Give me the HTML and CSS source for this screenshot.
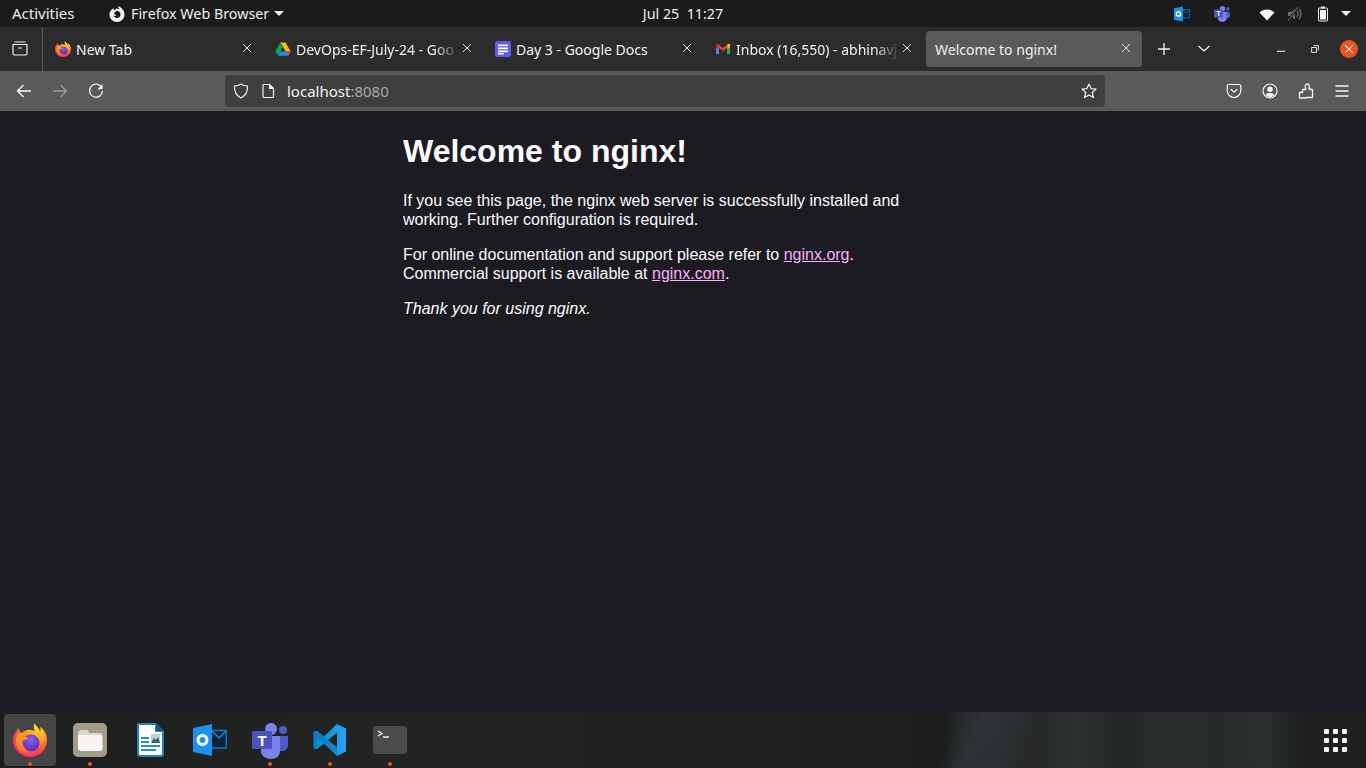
FILE: index.html
```html
<!DOCTYPE html>
<html>
<head>
  <meta charset="utf-8">
  <title>Welcome to nginx!</title>
  <link rel="stylesheet" href="styles.css">
</head>
<body>
  <svg class="icon-defs" width="0" height="0">
    <defs>
      <radialGradient id="fx-body" gradientUnits="userSpaceOnUse" cx="24" cy="6" r="32">
        <stop offset="0" stop-color="#ffd52e"/>
        <stop offset="0.35" stop-color="#ff9a1e"/>
        <stop offset="0.7" stop-color="#ff4a3c"/>
        <stop offset="1" stop-color="#f0207e"/>
      </radialGradient>
      <linearGradient id="fx-wave" x1="0" y1="0" x2="0.6" y2="1">
        <stop offset="0" stop-color="#ffa81e"/>
        <stop offset="0.6" stop-color="#ff7a28"/>
        <stop offset="1" stop-color="#ff3d55"/>
      </linearGradient>
      <linearGradient id="fx-flame" x1="0.3" y1="0" x2="0.7" y2="1">
        <stop offset="0" stop-color="#ffe03a"/>
        <stop offset="1" stop-color="#ffa01e"/>
      </linearGradient>
      <radialGradient id="fx-globe" cx="0.5" cy="0.3" r="0.75">
        <stop offset="0" stop-color="#8f5cf0"/>
        <stop offset="1" stop-color="#4c2bb8"/>
      </radialGradient>
      <linearGradient id="vs-light" x1="0" y1="0" x2="1" y2="0">
        <stop offset="0" stop-color="#0a84d0"/>
        <stop offset="1" stop-color="#27a5f0"/>
      </linearGradient>
      <symbol id="firefox" viewBox="0 0 34 34">
        <path fill="url(#fx-body)" d="M6 5C3 8 0 12 0 17C0 27 8 34 17 34C27 34 34 26 34 17C34 11 31 6 27 4C28 6 28 8 27 9C26 5 23 3 21 0C21 4 20 7 23 9C20 7 16 6 13 7.500C11 8 9 9.500 8.500 10C7 9 6 7 6 5Z"/>
        <circle fill="url(#fx-globe)" cx="18" cy="20" r="8.500"/>
        <path fill="url(#fx-flame)" d="M21 1C21 5 23 8 26 11C28 14 29 17 29 21C31 18 32 13 30 9C29 7 28 5 27 4C28 6 28 8 27 9C26 5 23 3 21 1Z"/>
        <path fill="url(#fx-wave)" d="M4 12C5 10 9 9 13 11C11 11 10 12 10 13C12 14 15 14 15 15.500C13 17 11 17 9 18C10 24 14 28.500 19 28.500C24 28.500 28 25 29 21C29 28 24 32 17 32C9 32 2 25 3 17Z"/>
      </symbol>
      <symbol id="teams" viewBox="0 0 36 36">
        <circle fill="#7b83eb" cx="19" cy="6" r="6"/>
        <circle fill="#5059c9" cx="31" cy="7" r="4"/>
        <path fill="#5059c9" d="M25 13H35C35.600 13 36 13.400 36 14V22C36 26 33 28 30 28C27 28 25 26 25 24Z"/>
        <path fill="#7b83eb" d="M9 13H28V28C28 33 24 36 19 36C14 36 9 33 9 28Z"/>
        <rect fill="#4b53bc" x="0" y="8" width="20" height="18" rx="1.500"/>
        <text class="teams-letter" x="10" y="22.500" text-anchor="middle">T</text>
      </symbol>
      <symbol id="outlook" viewBox="0 0 34 34">
        <path fill="#0c2436" stroke="#1573c5" stroke-width="1.500" d="M18 7.500H33.200V25H18Z"/>
        <path fill="none" stroke="#1f86dc" stroke-width="1.500" d="M19 8L26 15L33 8"/>
        <path fill="#1e90f0" d="M0 5L19 1V33L0 29Z"/>
        <circle fill="none" stroke="#fff" stroke-width="3" cx="9.500" cy="17" r="4.500"/>
      </symbol>
    </defs>
  </svg>

  <header class="top-bar">
    <div class="top-left">
      <span class="activities">Activities</span>
      <span class="app-menu">
        <svg class="app-logo" viewBox="0 0 16 16"><path fill="#f2f2f2" d="M9 0C9 1.500 10 2.500 11.500 3C10.500 2.700 9 2.700 8 3.200C7.700 2.800 7.600 2.400 7.600 2C6.800 2.600 6.200 3.500 6 4.500C5 4 4.500 3.200 4.200 2.300C1.600 4 0.500 6.300 0.500 8.500C0.500 12.700 3.800 16 8 16C12.200 16 15.500 12.700 15.500 8.500C15.500 4.800 13 1.500 9 0ZM8 5C10 5 11.500 6.500 11.500 8.500C11.500 10.500 10 12 8 12C6.200 12 4.800 10.800 4.500 9.200C5.500 10 7 10 8 9C7 9 5.500 8.500 5.200 7.200C5.800 6 6.800 5 8 5Z" fill-rule="evenodd"/></svg>
        Firefox Web Browser
        <span class="caret"></span>
      </span>
    </div>
    <div class="clock">Jul 25&nbsp;&nbsp;11:27</div>
    <div class="tray">
      <span class="tray-app"><svg class="tray-icon"><use href="#outlook"/></svg></span>
      <span class="tray-app"><svg class="tray-icon"><use href="#teams"/></svg></span>
      <span class="tray-item tray-wifi">
        <svg viewBox="0 0 16 16" class="status-icon"><path fill="#f4f4f4" d="M0.500 6.500C2.500 4.500 5 3.500 8 3.500C11 3.500 13.500 4.500 15.500 6.500L8 14.500Z"/></svg>
      </span>
      <span class="tray-item">
        <svg viewBox="0 0 16 16" class="status-icon"><path fill="#6f6f6f" d="M1 6H4L8 2.500V13.500L4 10H1Z"/><path fill="none" stroke="#6f6f6f" stroke-width="1.200" d="M10 5C11.500 6.500 11.500 9.500 10 11M12 3C14.500 5.500 14.500 10.500 12 13"/><path stroke="#1b1b1b" stroke-width="2.500" d="M1 15L11 1"/><path stroke="#6f6f6f" stroke-width="1" d="M1 15L11 1"/></svg>
      </span>
      <span class="tray-item">
        <svg viewBox="0 0 16 16" class="status-icon"><rect fill="#f4f4f4" x="6" y="0.500" width="4" height="2"/><rect x="3.500" y="2" width="9" height="13" rx="1" fill="none" stroke="#f4f4f4"/><rect fill="#f4f4f4" x="5" y="4" width="6" height="9.500"/></svg>
      </span>
      <span class="tray-caret"><span class="caret"></span></span>
    </div>
  </header>

  <nav class="tab-bar">
    <button class="tab-view">
      <svg viewBox="0 0 16 16" class="btn-icon"><path fill="none" stroke="#f2f2f2" stroke-width="1.200" d="M2.500 1H13.500M1 4.500C1 3.700 1.500 3 2.500 3.500H13.500C14.500 3 15 3.700 15 4.500V12.500C15 13.500 14.500 14 13.500 14H2.500C1.500 14 1 13.500 1 12.500ZM6 7H10"/></svg>
    </button>
    <div class="tabs">
      <div class="tab">
        <svg class="favicon"><use href="#firefox"/></svg>
        <span class="tab-title">New Tab</span>
        <svg class="tab-close" viewBox="0 0 10 10"><path d="M1 1L9 9M9 1L1 9"/></svg>
      </div>
      <div class="tab">
        <svg class="favicon" viewBox="0 0 16 16"><path fill="#ffba00" d="M5.500 1.500H10.500L15.700 10.500H10.500Z"/><path fill="#00a94b" d="M5.500 1.500L8 6L3 14.500L0.300 10.500Z"/><path fill="#2684fc" d="M5.500 10.500H15.700L13 14.700H3Z"/><path fill="#ea4335" d="M10.500 10.500H15.700L13 14.700H12.800Z"/></svg>
        <span class="tab-title tab-fade">DevOps-EF-July-24 - Goo</span>
        <svg class="tab-close" viewBox="0 0 10 10"><path d="M1 1L9 9M9 1L1 9"/></svg>
      </div>
      <div class="tab">
        <svg class="favicon" viewBox="0 0 16 16"><rect fill="#5e5bf0" width="16" height="16" rx="2"/><path fill="#fff" d="M3 3.500H13V5.300H3ZM3 6.500H13V8.300H3ZM3 9.500H13V11.300H3ZM3 12H9V13.600H3Z"/></svg>
        <span class="tab-title">Day 3 - Google Docs</span>
        <svg class="tab-close" viewBox="0 0 10 10"><path d="M1 1L9 9M9 1L1 9"/></svg>
      </div>
      <div class="tab">
        <svg class="favicon" viewBox="0 0 16 16"><path fill="#4285f4" d="M1 4H4V13H1Z"/><path fill="#34a853" d="M12 4H15V13H12Z"/><path fill="#ea4335" d="M3 3L8 7L13 3L15 4.500L8 10L1 4.500Z"/><path fill="#fbbc04" d="M13 3C14 2.400 15 3 15 4V6L12.500 8V3.500Z"/><path fill="#c5221f" d="M3 3C2 2.400 1 3 1 4V6L3.500 8V3.500Z"/></svg>
        <span class="tab-title tab-fade">Inbox (16,550) - abhinavj</span>
        <svg class="tab-close" viewBox="0 0 10 10"><path d="M1 1L9 9M9 1L1 9"/></svg>
      </div>
      <div class="tab tab-active">
        <span class="tab-title">Welcome to nginx!</span>
        <svg class="tab-close" viewBox="0 0 10 10"><path d="M1 1L9 9M9 1L1 9"/></svg>
      </div>
    </div>
    <button class="tab-btn">
      <svg viewBox="0 0 16 16" class="btn-icon"><path stroke="#f2f2f2" stroke-width="1.300" d="M8 2V14M2 8H14"/></svg>
    </button>
    <button class="tab-btn tab-btn-list">
      <svg viewBox="0 0 16 16" class="btn-icon"><path fill="none" stroke="#f2f2f2" stroke-width="1.200" d="M2.500 5L8 10L13.500 5"/></svg>
    </button>
    <div class="window-btns">
      <span class="win-btn"><svg viewBox="0 0 16 16" class="win-icon"><path stroke="#f2f2f2" stroke-width="1.400" d="M2.500 11H13.500"/></svg></span>
      <span class="win-btn"><svg viewBox="0 0 16 16" class="win-icon"><path fill="none" stroke="#f2f2f2" stroke-width="1.200" d="M3.500 6H10V12.500H3.500ZM6 3.500H12.500V10"/></svg></span>
      <span class="win-btn"><span class="win-close"><svg viewBox="0 0 16 16" class="win-icon"><path stroke="#fff" stroke-width="1.400" d="M3 3L13 13M13 3L3 13"/></svg></span></span>
    </div>
  </nav>

  <div class="nav-bar">
    <button class="nav-btn"><svg viewBox="0 0 16 16" class="btn-icon"><path fill="none" stroke="#f6f6f6" stroke-width="1.300" d="M15 8H1.500M7.500 2L1.500 8L7.500 14"/></svg></button>
    <button class="nav-btn"><svg viewBox="0 0 16 16" class="btn-icon"><path fill="none" stroke="#9a9a9a" stroke-width="1.300" d="M1 8H14.500M8.500 2L14.500 8L8.500 14"/></svg></button>
    <button class="nav-btn"><svg viewBox="0 0 16 16" class="btn-icon"><path fill="none" stroke="#f6f6f6" stroke-width="1.300" d="M13.500 4.200A6.500 6.500 0 1 0 14.500 8"/><path fill="#f6f6f6" d="M14.500 1V6.200H9.500Z"/></svg></button>
    <div class="url-bar">
      <svg viewBox="0 0 16 16" class="url-shield"><path fill="none" stroke="#f2f2f2" stroke-width="1.200" d="M8 1C10 2.400 12.500 3 14.500 3C14.800 8.500 13 12.500 8 15C3 12.500 1.200 8.500 1.500 3C3.500 3 6 2.400 8 1Z"/></svg>
      <svg viewBox="0 0 16 16" class="url-page"><path fill="none" stroke="#f2f2f2" stroke-width="1.200" d="M3 2.500C3 1.700 3.500 1.500 4 1.500H9.500L13.500 5.500V13.500C13.500 14.200 13 14.500 12.500 14.500H4C3.500 14.500 3 14.200 3 13.500Z"/><path fill="#f2f2f2" d="M9 1.500H10L13.500 5V6H9Z"/></svg>
      <span class="url-text">localhost<span class="url-port">:8080</span></span>
      <svg viewBox="0 0 16 16" class="url-star"><path fill="none" stroke="#f2f2f2" stroke-width="1.200" stroke-linejoin="round" d="M8 1L10.100 5.600L15 6.100L11.300 9.500L12.400 14.500L8 11.900L3.600 14.500L4.700 9.500L1 6.100L5.900 5.600Z"/></svg>
    </div>
    <div class="nav-right">
      <button class="nav-btn"><svg viewBox="0 0 16 16" class="btn-icon"><path fill="none" stroke="#f6f6f6" stroke-width="1.200" d="M2.500 1.500H13.500C14.200 1.500 14.800 2 14.800 2.800V7.500C14.800 11.500 11.500 14.500 8 14.500C4.500 14.500 1.200 11.500 1.200 7.500V2.800C1.200 2 1.800 1.500 2.500 1.500ZM4.800 6.300L8 9.300L11.200 6.300"/></svg></button>
      <button class="nav-btn"><svg viewBox="0 0 16 16" class="btn-icon"><circle cx="8" cy="8" r="7" fill="none" stroke="#f6f6f6" stroke-width="1.200"/><circle cx="8" cy="6.300" r="2.700" fill="#f6f6f6"/><path fill="#f6f6f6" d="M3.500 12C4.500 10.300 6 10 8 10C10 10 11.500 10.300 12.500 12C11 13.500 9.500 14 8 14C6.500 14 5 13.500 3.500 12Z"/></svg></button>
      <button class="nav-btn"><svg viewBox="0 0 16 16" class="btn-icon"><path fill="none" stroke="#f6f6f6" stroke-width="1.300" stroke-linejoin="round" d="M1.500 15H8V14.500H14.500V6.500H12V5.500H10.800C11.800 4.500 11.500 1 9.300 1C7.100 1 6.800 4.500 7.800 5.500V6.500H4.500V9.500H1.500Z"/></svg></button>
      <button class="nav-btn"><svg viewBox="0 0 16 16" class="btn-icon"><path stroke="#f6f6f6" stroke-width="1.300" d="M1.500 3H14.500M1.500 8H14.500M1.500 13H14.500"/></svg></button>
    </div>
  </div>

  <main class="page">
    <div class="page-inner">
      <h1>Welcome to nginx!</h1>
      <p>If you see this page, the nginx web server is successfully installed and
      working. Further configuration is required.</p>
      <p>For online documentation and support please refer to <a href="#">nginx.org</a>.<br>
      Commercial support is available at <a href="#">nginx.com</a>.</p>
      <p><em>Thank you for using nginx.</em></p>
    </div>
  </main>

  <footer class="dock">
    <div class="dock-item dock-item-active">
      <svg class="dock-icon"><use href="#firefox"/></svg>
      <span class="dock-dot"></span>
    </div>
    <div class="dock-item">
      <svg class="dock-icon" viewBox="0 0 34 34"><rect fill="#a39c8b" width="34" height="34" rx="5"/><path fill="#d9d6cf" d="M5 11C5 8 6 7 8 7H14L17 10H27C29 10 29.500 11 29.500 13V14H5Z"/><path fill="#f6f5f2" d="M5 12H27C29 12 29.500 13 29.500 15V25C29.500 27 28.500 28 27 28H8C6 28 5 27 5 25Z"/></svg>
      <span class="dock-dot"></span>
    </div>
    <div class="dock-item">
      <svg class="dock-icon" viewBox="0 0 34 34"><path fill="#1a86bd" d="M5 0H23L31 8V31C31 33 30 34 28 34H7C5 34 4 33 4 31V1Z"/><path fill="#fff" d="M6 2H22V9H29V30C29 31.500 28.500 32 27 32H8C6.500 32 6 31.500 6 30Z"/><path fill="#14587f" d="M23 0L31 8H23Z"/><path fill="#2a8cc0" d="M8 14H16V16H8ZM8 18H16V20H8ZM8 22H27V24H8ZM8 26H23V28H8Z"/><rect fill="#b8d4e3" x="18" y="11" width="9" height="9"/><path fill="#445a68" d="M18 20L21 15L23 17L25 14L27 20Z"/></svg>
      <span class="dock-dot dock-dot-none"></span>
    </div>
    <div class="dock-item">
      <svg class="dock-icon"><use href="#outlook"/></svg>
      <span class="dock-dot dock-dot-none"></span>
    </div>
    <div class="dock-item">
      <svg class="dock-icon dock-icon-teams"><use href="#teams"/></svg>
      <span class="dock-dot"></span>
    </div>
    <div class="dock-item">
      <svg class="dock-icon" viewBox="0 0 34 34"><path fill="url(#vs-light)" d="M24 1L33 5.500V28.500L24 33L11 20.500L3.500 26.500L0.500 25V9L3.500 7.500L11 13.500ZM24 9.500L15 17L24 24.500Z" fill-rule="evenodd"/><path fill="#0a73b8" d="M0.500 9L3.500 7.500L24 25V33L3.500 13.500L3.500 20.500L0.500 25Z" opacity="0.55"/></svg>
      <span class="dock-dot"></span>
    </div>
    <div class="dock-item">
      <svg class="dock-icon" viewBox="0 0 34 34"><rect fill="#4c4c4c" width="34" height="28" y="3" rx="4"/><path fill="none" stroke="#f2f2f2" stroke-width="1.300" d="M5 8L9 10.500L5 13M10 14H16"/></svg>
      <span class="dock-dot"></span>
    </div>
    <div class="dock-apps">
      <span></span><span></span><span></span>
      <span></span><span></span><span></span>
      <span></span><span></span><span></span>
    </div>
  </footer>
</body>
</html>
```

FILE: styles.css
```css
/* basic layout */
* {
  box-sizing: border-box;
}

html, body {
  height: 100%;
}

body {
  margin: 0;
  display: flex;
  flex-direction: column;
  overflow: hidden;
  font-family: "Noto Sans", sans-serif;
  color: #f2f2f2;
  background: #1c1b22;
}

button {
  border: none;
  background: none;
  padding: 0;
  display: flex;
  align-items: center;
  justify-content: center;
}

svg {
  display: block;
  flex: none;
}

.icon-defs {
  position: absolute;
}

.teams-letter {
  font-family: "Liberation Sans", sans-serif;
  font-size: 15px;
  font-weight: bold;
  fill: #fff;
}

/* gnome top bar */
.top-bar {
  height: 27px;
  flex: none;
  display: grid;
  grid-template-columns: 1fr auto 1fr;
  align-items: center;
  background: #1b1b1b;
  font-size: 14.3px;
  color: #eeeeee;
}

.top-left {
  display: flex;
  align-items: center;
}

.activities {
  margin: -2px 0 0 12px;
  width: 97px;
  font-size: 15px;
}

.app-menu {
  display: flex;
  align-items: center;
}

.app-logo {
  width: 16px;
  height: 16px;
  margin-right: 6px;
}

.caret {
  display: inline-block;
  width: 0;
  height: 0;
  margin-left: 5px;
  border-left: 5px solid transparent;
  border-right: 5px solid transparent;
  border-top: 5px solid #f2f2f2;
}

.tray {
  display: flex;
  align-items: center;
  justify-content: flex-end;
  padding-right: 11px;
}

.tray-app {
  width: 40px;
  display: flex;
  justify-content: center;
}

.tray-icon {
  width: 16px;
  height: 16px;
}

.tray-item {
  width: 28px;
  display: flex;
  justify-content: center;
}

.tray-wifi {
  margin-left: 11px;
}

.status-icon {
  width: 16px;
  height: 16px;
}

.tray-caret {
  width: 18px;
  display: flex;
  justify-content: center;
}

.tray-caret .caret {
  margin-left: 0;
}

/* firefox tabs */
.tab-bar {
  height: 44px;
  flex: none;
  display: flex;
  align-items: center;
  background: #2c2c2c;
  font-size: 14px;
}

.tab-view {
  width: 43px;
  height: 44px;
  margin-right: 1px;
  padding-right: 2px;
  border-right: 1px solid #5a5a5a;
}

.btn-icon {
  width: 16px;
  height: 16px;
}

.tabs {
  display: flex;
}

.tab {
  width: 220px;
  height: 36px;
  margin: 0;
  padding: 0 11px;
  display: flex;
  align-items: center;
  position: relative;
}

.favicon {
  width: 16px;
  height: 16px;
  margin-right: 5px;
}

.tab-title {
  white-space: nowrap;
  overflow: hidden;
  width: 163px;
}

.tab-fade {
  -webkit-mask-image: linear-gradient(to right, #000 85%, transparent);
  mask-image: linear-gradient(to right, #000 85%, transparent);
}

.tab-close {
  position: absolute;
  right: 12px;
  top: 12px;
  width: 10px;
  height: 10px;
  fill: none;
  stroke: #e8e8e8;
  stroke-width: 1;
}

.tab-active {
  margin: 0 2px;
  width: 216px;
  padding-left: 9px;
  border-radius: 4px;
  background: #5a5a5a;
}

.tab-active .tab-close {
  right: 11px;
}

.tab-btn {
  width: 36px;
  height: 36px;
  margin-left: 2px;
}

.tab-btn-list {
  margin-left: 4px;
}

.window-btns {
  margin-left: auto;
  display: flex;
}

.win-btn {
  width: 34px;
  display: flex;
  align-items: center;
  justify-content: center;
}

.win-icon {
  width: 12px;
  height: 12px;
}

.win-close {
  width: 18px;
  height: 18px;
  border-radius: 50%;
  background: #e95420;
  display: flex;
  align-items: center;
  justify-content: center;
}

/* firefox toolbar */
.nav-bar {
  height: 40px;
  flex: none;
  display: flex;
  align-items: center;
  padding: 0 6px;
  background: #5a5a5a;
}

.nav-btn {
  width: 36px;
  height: 32px;
}

.url-bar {
  width: 880px;
  height: 32px;
  margin-left: 111px;
  display: flex;
  align-items: center;
  padding: 0 8px;
  border-radius: 4px;
  background: #3f3f3f;
  font-size: 15px;
}

.url-shield {
  width: 16px;
  height: 16px;
}

.url-page {
  width: 16px;
  height: 16px;
  margin-left: 11px;
}

.url-text {
  margin-left: 11px;
  color: #f2f2f2;
}

.url-port {
  color: #a8a8a8;
}

.url-star {
  width: 16px;
  height: 16px;
  margin-left: auto;
}

.nav-right {
  margin-left: auto;
  display: flex;
}

/* nginx page */
.page {
  flex: 1;
  min-height: 0;
  background: #1c1b22;
  color: #fbfbfe;
  font-family: "Liberation Sans", Arial, sans-serif;
  font-size: 16px;
  line-height: 19px;
}

.page-inner {
  width: 560px;
  margin: 0 auto;
  overflow: hidden;
}

.page h1 {
  font-size: 32px;
  line-height: 37px;
  margin: 22px 0 21px;
}

.page p {
  margin: 16px 0;
}

.page a {
  color: #ffadff;
}

/* dock */
.dock {
  height: 56px;
  flex: none;
  display: flex;
  align-items: center;
  background:
    linear-gradient(115deg, transparent 0, transparent 69%, rgba(60, 66, 70, 0.35) 71%, transparent 75%, transparent 100%),
    linear-gradient(90deg, #1c1e1e 0, #212222 250px, #232525 440px, #1f2121 800px, #1c1e1e 945px, #26292b 960px, #292d2e 1000px, #262829 1035px, #2c3031 1075px, #232526 1125px, #292d2e 1155px, #262a2a 1220px, #2a2e2e 1265px, #1f2121 1305px, #1e2020 100%);
}

.dock-item {
  width: 60px;
  height: 52px;
  display: flex;
  align-items: center;
  justify-content: center;
  position: relative;
  border-radius: 4px;
}

.dock-item-active {
  width: 52px;
  margin: 0 4px;
  background: #454545;
}

.dock-icon {
  width: 34px;
  height: 34px;
  margin-top: -1px;
}

.dock-icon-teams {
  width: 36px;
  height: 36px;
  margin-top: 2px;
}

.dock-dot {
  position: absolute;
  left: 50%;
  bottom: 0;
  width: 4px;
  height: 4px;
  margin-left: -2px;
  border-radius: 50%;
  background: #e95420;
}

.dock-dot-none {
  display: none;
}

.dock-apps {
  margin-left: auto;
  margin-right: 19px;
  display: grid;
  grid-template-columns: repeat(3, 5px);
  gap: 4px;
}

.dock-apps span {
  width: 5px;
  height: 5px;
  border-radius: 1px;
  background: #f6f6f6;
}
```
